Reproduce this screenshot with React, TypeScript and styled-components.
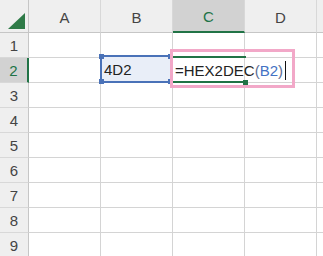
import React from "react";
import styled, { createGlobalStyle, css } from "styled-components";

const Global = createGlobalStyle`
  html, body { margin: 0; padding: 0; background: #fff; overflow: hidden; }
  body { font-family: "Liberation Sans", Arial, sans-serif; }
`;

const GREEN = "#217346";
const LINE = "#d4d4d4";

const Sheet = styled.div`
  display: grid;
  grid-template-columns: 29px repeat(4, 72px) 1fr;
  grid-template-rows: 33px repeat(9, 25px);
  width: 323px;
  height: 256px;
  overflow: hidden;
`;

const Corner = styled.div`
  position: relative;
  background: #efefef;
  border-right: 1px solid #c6c6c6;
  border-bottom: 1px solid #c6c6c6;
  box-sizing: border-box;
`;

const Triangle = styled.div`
  position: absolute;
  right: 3px;
  bottom: 3px;
  width: 0;
  height: 0;
  border-left: 17px solid transparent;
  border-bottom: 16px solid #2e7a47;
`;

const ColHead = styled.div<{ $sel?: boolean; $last?: boolean }>`
  box-sizing: border-box;
  display: flex;
  align-items: center;
  justify-content: center;
  font-size: 15px;
  padding-top: 2px;
  color: #444;
  background: #efefef;
  border-right: ${(p) => (p.$last ? "none" : "1px solid #d8d8d8")};
  border-bottom: 1px solid #c6c6c6;
  ${(p) =>
    p.$sel &&
    css`
      background: #d2d2d2;
      color: ${GREEN};
      border-bottom: 2px solid ${GREEN};
    `}
`;

const RowHead = styled.div<{ $sel?: boolean }>`
  box-sizing: border-box;
  display: flex;
  align-items: center;
  justify-content: center;
  font-size: 15px;
  color: #444;
  background: #efefef;
  border-right: 1px solid #c6c6c6;
  border-bottom: 1px solid #d8d8d8;
  ${(p) =>
    p.$sel &&
    css`
      background: #d2d2d2;
      color: ${GREEN};
      border-right: 2px solid ${GREEN};
    `}
`;

const Cell = styled.div<{ $last?: boolean }>`
  position: relative;
  box-sizing: border-box;
  border-right: ${(p) => (p.$last ? "none" : `1px solid ${LINE}`)};
  border-bottom: 1px solid ${LINE};
  font-size: 15px;
  color: #222;
`;

const RefBox = styled.div`
  position: absolute;
  left: -1px;
  top: -3px;
  width: 72px;
  height: 28px;
  box-sizing: border-box;
  border: 2px solid #4a72b8;
  background: #e9eef8;
  display: flex;
  align-items: center;
  padding-left: 2px;
  z-index: 1;
`;

const Handle = styled.span<{ $x: "l" | "r"; $y: "t" | "b" }>`
  position: absolute;
  width: 5px;
  height: 5px;
  background: #4a72b8;
  ${(p) => (p.$x === "l" ? "left: -3px;" : "right: -3px;")}
  ${(p) => (p.$y === "t" ? "top: -3px;" : "bottom: -3px;")}
`;

const ActiveLine = styled.div<{ $pos: "t" | "b" }>`
  position: absolute;
  left: 0;
  width: 73px;
  height: 2px;
  background: ${GREEN};
  z-index: 2;
  ${(p) => (p.$pos === "t" ? "top: -2px;" : "bottom: -1px;")}
`;

const FillHandle = styled.div`
  position: absolute;
  right: -4px;
  bottom: -3px;
  width: 5px;
  height: 5px;
  background: ${GREEN};
  z-index: 3;
`;

const Editor = styled.div`
  position: absolute;
  left: 2px;
  top: 0;
  height: 24px;
  display: flex;
  align-items: center;
  white-space: nowrap;
  z-index: 4;
  color: #222;
`;

const Paren = styled.span`
  color: #5b6e94;
`;

const Ref = styled.span`
  color: #4472c4;
`;

const Caret = styled.span`
  display: inline-block;
  width: 1px;
  height: 19px;
  margin-left: 2px;
  background: #111;
`;

const Annotation = styled.div`
  position: absolute;
  left: -3px;
  top: -9px;
  width: 125px;
  height: 39px;
  box-sizing: border-box;
  border: 3px solid #f2a8c8;
  z-index: 5;
  pointer-events: none;
`;

const cols = ["A", "B", "C", "D", ""];

export default function App() {
  const rows = [1, 2, 3, 4, 5, 6, 7, 8, 9];
  return (
    <>
      <Global />
      <Sheet>
        <Corner>
          <Triangle />
        </Corner>
        {cols.map((c, i) => (
          <ColHead key={c + i} $sel={c === "C"} $last={i === cols.length - 1}>
            {c}
          </ColHead>
        ))}
        {rows.map((r) => (
          <React.Fragment key={r}>
            <RowHead $sel={r === 2}>{r}</RowHead>
            {cols.map((c, i) => (
              <Cell key={c + i} $last={i === cols.length - 1}>
                {r === 2 && c === "B" && (
                  <RefBox>
                    4D2
                    <Handle $x="l" $y="t" />
                    <Handle $x="r" $y="t" />
                    <Handle $x="l" $y="b" />
                    <Handle $x="r" $y="b" />
                  </RefBox>
                )}
                {r === 2 && c === "C" && (
                  <>
                    <ActiveLine $pos="t" />
                    <ActiveLine $pos="b" />
                    <FillHandle />
                    <Editor>
                      =HEX2DEC<Paren>(</Paren>
                      <Ref>B2</Ref>
                      <Paren>)</Paren>
                      <Caret />
                    </Editor>
                    <Annotation />
                  </>
                )}
              </Cell>
            ))}
          </React.Fragment>
        ))}
      </Sheet>
    </>
  );
}
